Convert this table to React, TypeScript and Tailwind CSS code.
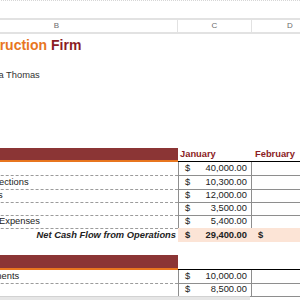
const cols = "grid grid-cols-[242px_74px_76px]";

type Row = { label: string; amount?: string };

const operations: Row[] = [
  { label: "Revenue", amount: "40,000.00" },
  { label: "Progress Collections", amount: "10,300.00" },
  { label: "Material Costs", amount: "12,000.00" },
  { label: "Labor", amount: "3,500.00" },
  { label: "Maintenance Expenses", amount: "5,400.00" },
];

const investing: Row[] = [
  { label: "Asset Investments", amount: "10,000.00" },
  { label: "Equipment", amount: "8,500.00" },
];

function BandRow({ title, month, next, tall }: { title: string; month?: string; next?: string; tall?: boolean }) {
  return (
    <div className={`${cols} ${tall ? "h-[15px]" : "h-[14px]"}`}>
      <div className="border-b-2 border-[#e8761f] bg-[#8b3535] pl-[7px] text-[9.33px] font-bold leading-[12px] text-white">
        {title}
      </div>
      <div className="border-b border-black pl-[2px] text-[9.33px] font-bold leading-[13px] text-[#8b1c24]">
        {month}
      </div>
      <div className="border-b border-black pl-[3px] text-[9.33px] font-bold leading-[13px] text-[#8b1c24]">
        {next}
      </div>
    </div>
  );
}

function DataRow({ row, first }: { row: Row; first?: boolean }) {
  return (
    <div className={`${cols} ${first ? "h-[14px]" : "h-[13px]"} text-[9.33px] leading-[13px] text-[#222]`}>
      <div className="whitespace-nowrap border-b border-dashed border-[#9b9b9b] pl-[7px]">
        {row.label}
      </div>
      <div className="flex justify-between border-x border-b border-[#8e8e8e] pl-[6px] pr-[4px]">
        <span>$</span>
        <span>{row.amount}</span>
      </div>
      <div className="border-b border-[#8e8e8e]" />
    </div>
  );
}

export default function App() {
  return (
    <div className="relative h-[300px] w-[300px] overflow-hidden bg-white font-['Liberation_Sans',Arial,sans-serif]">
      <div className="-ml-[64px] w-[392px]">
        <div className="h-[18px] border-t border-dotted border-[#d6d6d6]" />

        <div className={`${cols} h-[16px] border-y-2 border-[#e2e2e2] text-center text-[8px] leading-[12px] text-[#6b6b6b]`}>
          <div className="border-r border-[#e2e2e2]">B</div>
          <div className="border-r border-[#e2e2e2]">C</div>
          <div>D</div>
        </div>

        <div className="h-[26px] pl-[24px] pt-[3px] text-[14px] font-bold leading-[17px]">
          <span className="text-[#e8761f]">Construction</span>{" "}
          <span className="text-[#8b1c24]">Firm</span>
        </div>

        <div className="h-[88px] pl-[7px] pt-[9px] text-[9.33px] leading-[13px] text-[#333]">
          Contact: Olivia Thomas
        </div>

        <BandRow title="Operations" month="January" next="February" />
        {operations.map((row, i) => (
          <DataRow key={row.label} row={row} first={i === 0} />
        ))}

        <div className={`${cols} h-[14px] text-[9.33px] font-bold leading-[14px] text-[#222]`}>
          <div className="pr-[2px] text-right italic">Net Cash Flow from Operations</div>
          <div className="flex justify-between bg-[#fce4d6] pl-[7px] pr-[5px]">
            <span>$</span>
            <span>29,400.00</span>
          </div>
          <div className="bg-[#fce4d6] pl-[6px]">$</div>
        </div>

        <div className="h-[13px]" />

        <BandRow title="Investing" tall />
        {investing.map((row) => (
          <DataRow key={row.label} row={row} />
        ))}
      </div>

      <div className="absolute bottom-0 left-0 h-[4px] w-[250px] border-t border-[#d2d2d2] bg-[#e6e6e6]" />
    </div>
  );
}
